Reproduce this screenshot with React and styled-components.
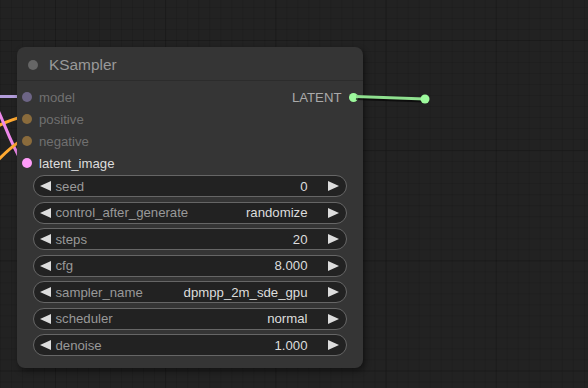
import React from "react";
import styled, { createGlobalStyle } from "styled-components";

const colors = {
  canvas: "#222",
  node: "#353535",
  title: "#999",
  widgetBg: "#222",
  widgetLine: "#666",
  text: "#ddd",
  label: "#999",
};

const GlobalStyle = createGlobalStyle`
  html, body {
    margin: 0;
    padding: 0;
    background: ${colors.canvas};
  }
  * {
    box-sizing: border-box;
  }
`;

const Canvas = styled.div`
  position: relative;
  width: 588px;
  height: 388px;
  overflow: hidden;
  font-family: "Liberation Sans", Arial, sans-serif;
  background-color: #222;
  background-image:
    linear-gradient(to right, rgba(0, 0, 0, 0.14) 1px, transparent 1px),
    linear-gradient(to bottom, rgba(0, 0, 0, 0.14) 1px, transparent 1px),
    linear-gradient(to right, rgba(0, 0, 0, 0.1) 1px, transparent 1px),
    linear-gradient(to bottom, rgba(0, 0, 0, 0.1) 1px, transparent 1px);
  background-size: 110.2px 110.2px, 110.2px 110.2px, 11.02px 11.02px, 11.02px 11.02px;
  background-position: 55px 40px, 55px 40px, 0px 7px, 0px 7px;
`;

const Wires = styled.svg`
  position: absolute;
  left: 0;
  top: 0;
  width: 588px;
  height: 388px;
  z-index: ${(p) => (p.$front ? 2 : 0)};
  pointer-events: none;
`;

const Node = styled.div`
  position: absolute;
  left: 17px;
  top: 47px;
  width: 346px;
  height: 321px;
  z-index: 1;
  background: ${colors.node};
  border-radius: 8px;
  box-shadow: 2px 3px 6px rgba(0, 0, 0, 0.45);
  display: flex;
  flex-direction: column;
`;

const TitleBar = styled.div`
  height: 34px;
  display: flex;
  align-items: center;
  gap: 11px;
  padding: 2px 0 0 11px;
  border-bottom: 1px solid #2c2c2c;
  color: ${colors.title};
  font-size: 15.4px;
`;

const TitleDot = styled.span`
  width: 10px;
  height: 10px;
  border-radius: 50%;
  background: #666;
`;

const Slots = styled.div`
  padding-top: 5px;
  display: flex;
  flex-direction: column;
`;

const SlotRow = styled.div`
  height: 22px;
  display: flex;
  align-items: center;
  justify-content: space-between;
  font-size: 13.2px;
`;

const Input = styled.div`
  display: flex;
  align-items: center;
  gap: 7px;
  padding-left: 5px;
  color: ${(p) => (p.$active ? "#ddd" : "#707070")};
`;

const Output = styled.div`
  display: flex;
  align-items: center;
  gap: 7px;
  padding-right: 5.5px;
  color: #aaa;
`;

const SlotDot = styled.span`
  width: ${(p) => p.$size || 10}px;
  height: ${(p) => p.$size || 10}px;
  border-radius: 50%;
  background: ${(p) => p.$color};
`;

const Widgets = styled.div`
  padding: 1px 16.5px 0 16px;
  display: flex;
  flex-direction: column;
  gap: 4.5px;
`;

const Widget = styled.div`
  height: 22px;
  display: flex;
  align-items: center;
  padding: 0 6.5px 0 6px;
  background: ${colors.widgetBg};
  border: 1px solid ${colors.widgetLine};
  border-radius: 11px;
  font-size: 13.2px;
`;

const Arrow = styled.span`
  width: 0;
  height: 0;
  border-top: 5.5px solid transparent;
  border-bottom: 5.5px solid transparent;
  ${(p) =>
    p.$right
      ? `border-left: 11px solid ${colors.text};`
      : `border-right: 11px solid ${colors.text};`}
`;

const Label = styled.span`
  margin-left: 4.5px;
  color: ${colors.label};
  flex: 1;
`;

const Value = styled.span`
  color: ${colors.text};
  margin-right: 20.5px;
`;

const inputs = [
  { name: "model", color: "#6d6586" },
  { name: "positive", color: "#8a6b3c" },
  { name: "negative", color: "#8a6b3c" },
  { name: "latent_image", color: "#ff9cf9", active: true },
];

const widgets = [
  ["seed", "0"],
  ["control_after_generate", "randomize"],
  ["steps", "20"],
  ["cfg", "8.000"],
  ["sampler_name", "dpmpp_2m_sde_gpu"],
  ["scheduler", "normal"],
  ["denoise", "1.000"],
];

export default function App() {
  return (
    <>
      <GlobalStyle />
      <Canvas>
        <Wires viewBox="0 0 588 388">
          <path d="M -5 96.5 L 22 96.5" stroke="#b39ddb" strokeWidth="3" fill="none" />
          <path d="M -2 126 C 6 122, 12 119, 22 117" stroke="#ffa931" strokeWidth="3" fill="none" />
          <path d="M -4 106 C 4 122, 10 142, 22 162" stroke="#ee88ea" strokeWidth="3" fill="none" />
          <path d="M -2 160 C 6 152, 12 146, 22 140" stroke="#ffa931" strokeWidth="3" fill="none" />
        </Wires>
        <Node>
          <TitleBar>
            <TitleDot />
            KSampler
          </TitleBar>
          <Slots>
            {inputs.map((input, i) => (
              <SlotRow key={input.name}>
                <Input $active={input.active}>
                  <SlotDot $color={input.color} />
                  {input.name}
                </Input>
                {i === 0 && (
                  <Output>
                    LATENT
                    <SlotDot $color="#9dfa9d" $size={9} />
                  </Output>
                )}
              </SlotRow>
            ))}
          </Slots>
          <Widgets>
            {widgets.map(([label, value]) => (
              <Widget key={label}>
                <Arrow />
                <Label>{label}</Label>
                <Value>{value}</Value>
                <Arrow $right />
              </Widget>
            ))}
          </Widgets>
        </Node>
        <Wires $front viewBox="0 0 588 388">
          <path d="M 356 97.5 L 425 100" stroke="#000" strokeWidth="5" fill="none" opacity="0.6" />
          <path d="M 356 96.5 L 425 99" stroke="#8fe08f" strokeWidth="3" fill="none" />
          <circle cx="425" cy="99" r="4.5" fill="#9dfa9d" />
        </Wires>
      </Canvas>
    </>
  );
}
